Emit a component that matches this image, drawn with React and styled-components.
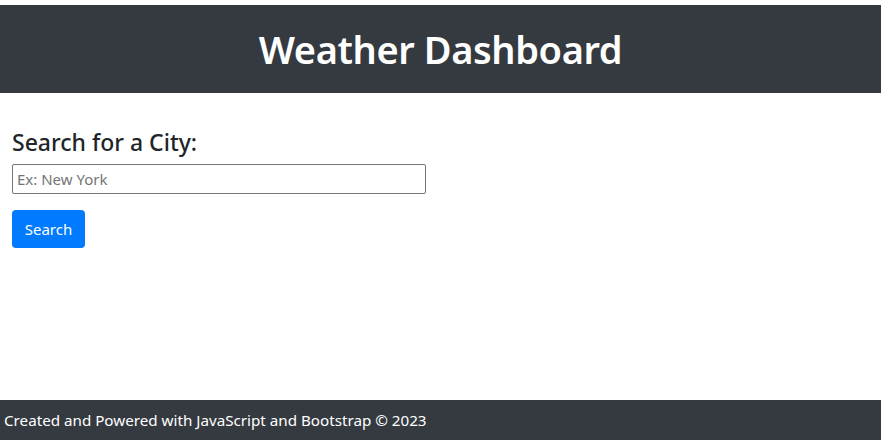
import React from 'react';
import styled, { createGlobalStyle } from 'styled-components';

const GlobalStyle = createGlobalStyle`
  html, body {
    margin: 0;
    padding: 0;
    background: #fff;
  }
  body {
    font-family: 'Noto Sans', 'Open Sans', sans-serif;
    color: #212529;
  }
`;

const Page = styled.div`
  display: flex;
  flex-direction: column;
  height: 442px;
`;

const Header = styled.header`
  margin-top: 5px;
  height: 88px;
  background: #343a40;
  display: flex;
  align-items: center;
  justify-content: center;
  h1 {
    margin: 0;
    color: #fff;
    font-size: 38px;
    font-weight: 600;
    letter-spacing: -0.4px;
  }
`;

const Main = styled.main`
  flex: 1;
  padding: 36px 12px 0;
  display: flex;
  flex-direction: column;
  align-items: flex-start;
`;

const Label = styled.h4`
  margin: 0 0 7px;
  font-size: 23px;
  font-weight: 500;
  line-height: 1.2;
  color: #212529;
`;

const Input = styled.input`
  box-sizing: border-box;
  width: 414px;
  height: 30px;
  padding: 0 4px;
  border: 1px solid #767676;
  border-radius: 2px;
  font-family: inherit;
  font-size: 15px;
  color: #212529;
  &::placeholder {
    color: #757575;
  }
`;

const Button = styled.button`
  margin-top: 16px;
  width: 73px;
  height: 38px;
  border: none;
  border-radius: 4px;
  background: #007bff;
  color: #fff;
  font-family: inherit;
  font-size: 15px;
  cursor: pointer;
`;

const Footer = styled.footer`
  height: 40px;
  margin-bottom: 2px;
  background: #343a40;
  color: #fff;
  display: flex;
  align-items: center;
  padding: 0 4px;
  font-size: 15.2px;
`;

const App = () => {
  return (
    <Page>
      <GlobalStyle />
      <Header>
        <h1>Weather Dashboard</h1>
      </Header>
      <Main>
        <Label>Search for a City:</Label>
        <Input type="text" placeholder="Ex: New York" />
        <Button type="button">Search</Button>
      </Main>
      <Footer>Created and Powered with JavaScript and Bootstrap © 2023</Footer>
    </Page>
  );
};

export default App;
